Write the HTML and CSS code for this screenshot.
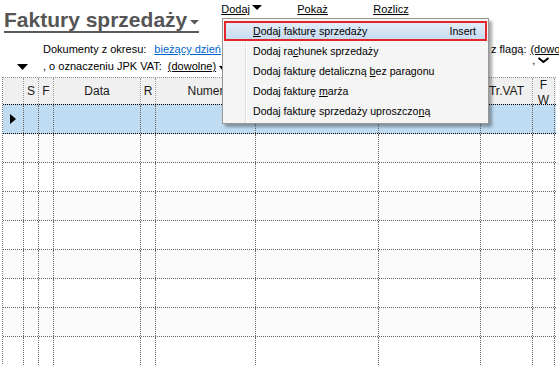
FILE: index.html
```html
<!DOCTYPE html>
<html lang="pl">
<head>
    <meta charset="UTF-8">
    <title>Faktury sprzedaży</title>
    <link rel="stylesheet" href="styles.css">
</head>
<body>
    <div class="top">
        <h1 class="title">Faktury sprzedaży<svg class="title-arrow" width="9" height="5" viewBox="0 0 9 5"><path d="M0 0h9L4.5 4.5z" fill="#595959"/></svg></h1>
        <nav class="menubar">
            <span class="menu-link">Dodaj<svg class="menu-arrow" width="10" height="5" viewBox="0 0 10 5"><path d="M0 0h10L5 5z"/></svg></span>
            <span class="menu-link">Pokaż</span>
            <span class="menu-link">Rozlicz</span>
        </nav>
    </div>

    <div class="filters">
        <div class="filter-toggle">
            <svg width="11" height="6" viewBox="0 0 11 6"><path d="M0 0h11L5.5 6z"/></svg>
        </div>
        <div class="filter-lines">
            <div class="filter-line">
                <span>Dokumenty z okresu:</span>
                <span class="link">bieżący dzień</span>
                <span class="flag">z flagą:</span>
                <span class="choice">(dowolne)</span>
            </div>
            <div class="filter-line">
                <span>, o oznaczeniu JPK VAT:</span>
                <span class="choice">(dowolne)</span>
                <svg class="choice-arrow" width="6" height="4" viewBox="0 0 6 4"><path d="M0 0h6L3 4z"/></svg>
                <span class="stray">,<svg width="13" height="6" viewBox="0 0 13 6"><path d="M1.5 1l5 4 5-4" fill="none" stroke="#000" stroke-width="2"/></svg></span>
            </div>
        </div>
    </div>

    <div class="grid">
        <div class="row head">
            <div></div>
            <div>S</div>
            <div>F</div>
            <div>Data</div>
            <div>R</div>
            <div>Numer</div>
            <div></div>
            <div></div>
            <div>Tr.VAT</div>
            <div class="wrap">F W</div>
        </div>
        <div class="row selected">
            <div class="indicator"><svg width="6" height="10" viewBox="0 0 6 10"><path d="M0 0l6 5-6 5z"/></svg></div>
            <div></div><div></div><div></div><div></div><div></div><div></div><div></div><div></div><div></div>
        </div>
        <div class="row alt"><div></div><div></div><div></div><div></div><div></div><div></div><div></div><div></div><div></div><div></div></div>
        <div class="row"><div></div><div></div><div></div><div></div><div></div><div></div><div></div><div></div><div></div><div></div></div>
        <div class="row alt"><div></div><div></div><div></div><div></div><div></div><div></div><div></div><div></div><div></div><div></div></div>
        <div class="row"><div></div><div></div><div></div><div></div><div></div><div></div><div></div><div></div><div></div><div></div></div>
        <div class="row alt"><div></div><div></div><div></div><div></div><div></div><div></div><div></div><div></div><div></div><div></div></div>
        <div class="row"><div></div><div></div><div></div><div></div><div></div><div></div><div></div><div></div><div></div><div></div></div>
        <div class="row alt"><div></div><div></div><div></div><div></div><div></div><div></div><div></div><div></div><div></div><div></div></div>
        <div class="row"><div></div><div></div><div></div><div></div><div></div><div></div><div></div><div></div><div></div><div></div></div>
    </div>

    <div class="dropdown">
        <div class="drop-item active"><span><u>D</u>odaj fakturę sprzedaży</span><span>Insert</span></div>
        <div class="drop-item"><span>Dodaj ra<u>c</u>hunek sprzedaży</span></div>
        <div class="drop-item"><span>Dodaj fakturę detaliczną <u>b</u>ez paragonu</span></div>
        <div class="drop-item"><span>Dodaj fakturę <u>m</u>arża</span></div>
        <div class="drop-item"><span>Dodaj fakturę sprzedaży uproszczo<u>n</u>ą</span></div>
    </div>
</body>
</html>
```

FILE: styles.css
```css
body {
    margin: 0;
    width: 559px;
    height: 365px;
    overflow: hidden;
    position: relative;
    background: #fff;
    color: #000;
    font-family: "Liberation Sans", Arial, sans-serif;
    font-size: 11px;
}

/* header: title + menu bar */
.top {
    display: flex;
    align-items: flex-start;
    height: 41px;
}

.title {
    display: inline-flex;
    align-items: center;
    margin: 9px 0 0 4px;
    font-size: 21px;
    line-height: 22px;
    font-weight: bold;
    color: #555;
    border-bottom: 2px solid #595959;
}

.title-arrow {
    margin: 4px 0 0 3px;
}

.menubar {
    display: flex;
    margin: 3px 0 0 22px;
}

.menu-link {
    display: inline-flex;
    align-items: flex-start;
    width: 76px;
    line-height: 12px;
    text-decoration: underline;
}

.menu-arrow {
    margin: 2px 0 0 2px;
}

/* filters */
.filters {
    display: flex;
    height: 36px;
}

.filter-toggle {
    flex: none;
    width: 43px;
    padding: 23px 0 0 17px;
    box-sizing: border-box;
}

.filter-toggle svg {
    display: block;
}

.filter-line {
    display: flex;
    align-items: baseline;
    height: 17px;
    line-height: 17px;
    white-space: nowrap;
}

.link {
    margin-left: 8px;
    color: #0066cc;
    text-decoration: underline;
}

.flag {
    margin-left: 270px;
}

.choice {
    margin-left: 4px;
    text-decoration: underline;
}

.filter-line .choice:nth-child(2) {
    margin-left: 6px;
}

.choice-arrow {
    margin-left: 3px;
}

.stray {
    display: inline-flex;
    align-items: flex-start;
    align-self: flex-start;
    margin: -2px 0 0 307px;
    line-height: 8px;
}

.stray svg {
    margin: 1px 0 0 2px;
}

/* grid */
.grid {
    margin-left: 2px;
    width: 553px;
    border-left: 1px dotted #777;
}

.row {
    display: grid;
    grid-template-columns: 21px 15px 15px 87px 15px 100px 123px 102px 52px 22px;
    height: 29px;
    border-bottom: 1px dotted #666;
    box-sizing: border-box;
}

.row > div {
    border-right: 1px dotted #666;
}

.row.alt {
    background: #fbfbfb;
}

.row.head {
    height: 27px;
    border-top: 1px dotted #999;
    border-bottom: none;
    background: #f0f0f0;
    font-size: 12px;
    color: #1a1a1a;
}

.row.head > div {
    display: flex;
    align-items: center;
    justify-content: center;
    border-right-color: #999;
    overflow: hidden;
}

.row.head > .wrap {
    align-items: flex-start;
    text-align: center;
    line-height: 15px;
    word-break: break-all;
}

.row.selected {
    height: 30px;
    border-top: 1px dotted #000;
    border-bottom: 1px dotted #000;
    background: #c0dcf3;
}

.indicator {
    display: flex;
    align-items: center;
    justify-content: center;
}

/* dropdown menu */
.dropdown {
    position: absolute;
    left: 222px;
    top: 18px;
    width: 267px;
    padding: 2px 1px;
    box-sizing: border-box;
    border: 1px solid #979797;
    background:
        linear-gradient(to right, transparent 22px, #e2e3e3 22px, #e2e3e3 23px, #fff 23px, #fff 24px, transparent 24px),
        #f5f5f5;
    box-shadow: 3px 3px 3px rgba(0, 0, 0, 0.35);
    font-size: 10.6px;
}

.drop-item {
    display: flex;
    justify-content: space-between;
    align-items: center;
    height: 20px;
    padding: 0 9px 0 27px;
    border: 2px solid transparent;
    box-sizing: border-box;
}

.drop-item.active {
    border-color: #e3262b;
    background: linear-gradient(#e3edf9, #c7dbf1);
}
```
